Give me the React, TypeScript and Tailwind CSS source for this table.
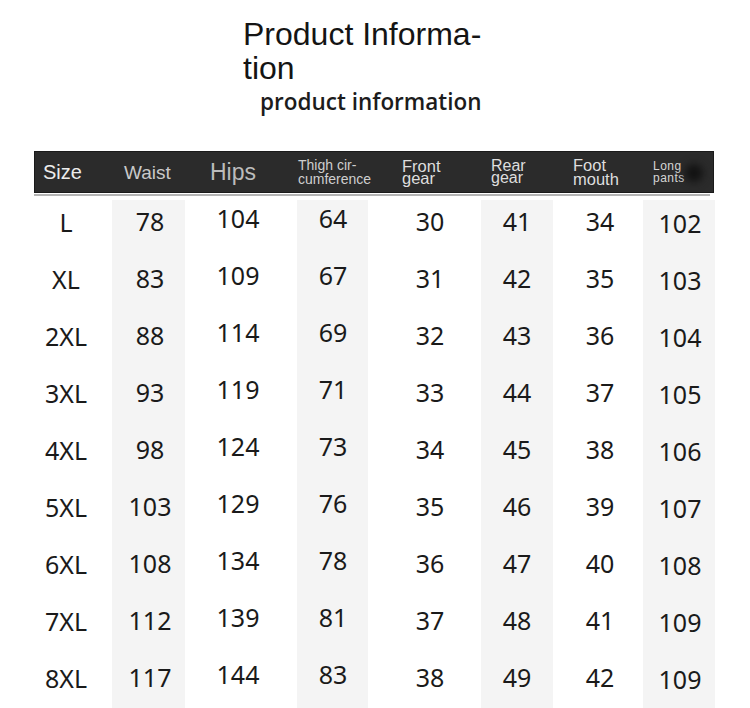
import React from 'react';

interface Col {
    key: string;
    width: string;
    shade: boolean;
    cell: string;
}

// column widths and the small per-column nudges seen in the original print
const columns: Col[] = [
    { key: 'size', width: 'w-[78px]', shade: false, cell: 'pb-[13px] pr-[14px]' },
    { key: 'waist', width: 'w-[73px]', shade: true, cell: 'pb-[15px] pl-[3px]' },
    { key: 'hips', width: 'w-[112px]', shade: false, cell: 'pb-[21px] pr-[6px]' },
    { key: 'thigh', width: 'w-[71px]', shade: true, cell: 'pb-[21px] pl-[1px]' },
    { key: 'front', width: 'w-[113px]', shade: false, cell: 'pb-[15px] pl-[11px]' },
    { key: 'rear', width: 'w-[72px]', shade: true, cell: 'pb-[15px]' },
    { key: 'foot', width: 'w-[90px]', shade: false, cell: 'pb-[15px] pl-[4px]' },
    { key: 'long', width: 'w-[72px]', shade: true, cell: 'pb-[11px] pl-[2px]' },
];

const rows: string[][] = [
    ['L', '78', '104', '64', '30', '41', '34', '102'],
    ['XL', '83', '109', '67', '31', '42', '35', '103'],
    ['2XL', '88', '114', '69', '32', '43', '36', '104'],
    ['3XL', '93', '119', '71', '33', '44', '37', '105'],
    ['4XL', '98', '124', '73', '34', '45', '38', '106'],
    ['5XL', '103', '129', '76', '35', '46', '39', '107'],
    ['6XL', '108', '134', '78', '36', '47', '40', '108'],
    ['7XL', '112', '139', '81', '37', '48', '41', '109'],
    ['8XL', '117', '144', '83', '38', '49', '42', '109'],
];

const HeaderBar: React.FC = () => (
    <div className="relative ml-[34px] w-[680px]">
        <div className="relative flex h-[42px] items-center border border-[#1a1a1a] bg-[#2b2b2b] pl-[8px] font-['Liberation_Sans',Arial,sans-serif]">
            <div className="w-[81px] text-[20px] text-[#ececec]">Size</div>
            <div className="w-[86px] pt-[2px] text-[19px] text-[#c9c9c9]">Waist</div>
            <div className="w-[88px] text-[23px] text-[#bcbcbc]">Hips</div>
            <div className="w-[104px] text-[14px] leading-[14px] text-[#cfcfcf]">
                <div>Thigh cir-</div>
                <div>cumference</div>
            </div>
            <div className="w-[89px] text-[16.5px] leading-[12px] text-[#dedede]">
                <div>Front</div>
                <div>gear</div>
            </div>
            <div className="w-[82px] text-[16px] leading-[12px] text-[#dedede]">
                <div>Rear</div>
                <div>gear</div>
            </div>
            <div className="w-[80px] text-[16.5px] leading-[14px] text-[#dedede]">
                <div>Foot</div>
                <div>mouth</div>
            </div>
            <div className="text-[12px] leading-[12px] tracking-[0.5px] text-[#d6d6d6]">
                <div>Long</div>
                <div>pants</div>
            </div>
            <div className="absolute right-[10px] top-[12px] h-[18px] w-[18px] rounded-full bg-[#111] blur-[4px]" />
        </div>
        <div className="mt-[1px] h-[2px] w-[676px] bg-[#b4b4b4]" />
    </div>
);

export default function App() {
    return (
        <div className="h-[708px] w-[750px] overflow-hidden bg-white">
            <div className="pl-[243px] pt-[17px] font-['Liberation_Sans',Arial,sans-serif] text-[32px] leading-[34px] text-[#141414]">
                Product Informa-
                <br />
                tion
            </div>
            <div className="mt-[3px] pl-[260px] font-['Open_Sans','Noto_Sans',sans-serif] text-[22.5px] font-semibold leading-[28px] text-[#1c1c1c]">
                product information
            </div>
            <div className="mt-[35px]">
                <HeaderBar />
            </div>
            <div className="ml-[34px] mt-[4px] flex font-['Noto_Sans','Open_Sans',sans-serif] text-[25px] leading-[25px] text-[#1a1a1a]">
                {columns.map((col, ci) => (
                    <div key={col.key} className={`${col.width} flex flex-col ${col.shade ? 'bg-[#f4f4f4]' : ''}`}>
                        {rows.map((r) => (
                            <div key={r[0]} className={`flex h-[57px] items-center justify-center ${col.cell}`}>
                                {r[ci]}
                            </div>
                        ))}
                    </div>
                ))}
            </div>
        </div>
    );
}
